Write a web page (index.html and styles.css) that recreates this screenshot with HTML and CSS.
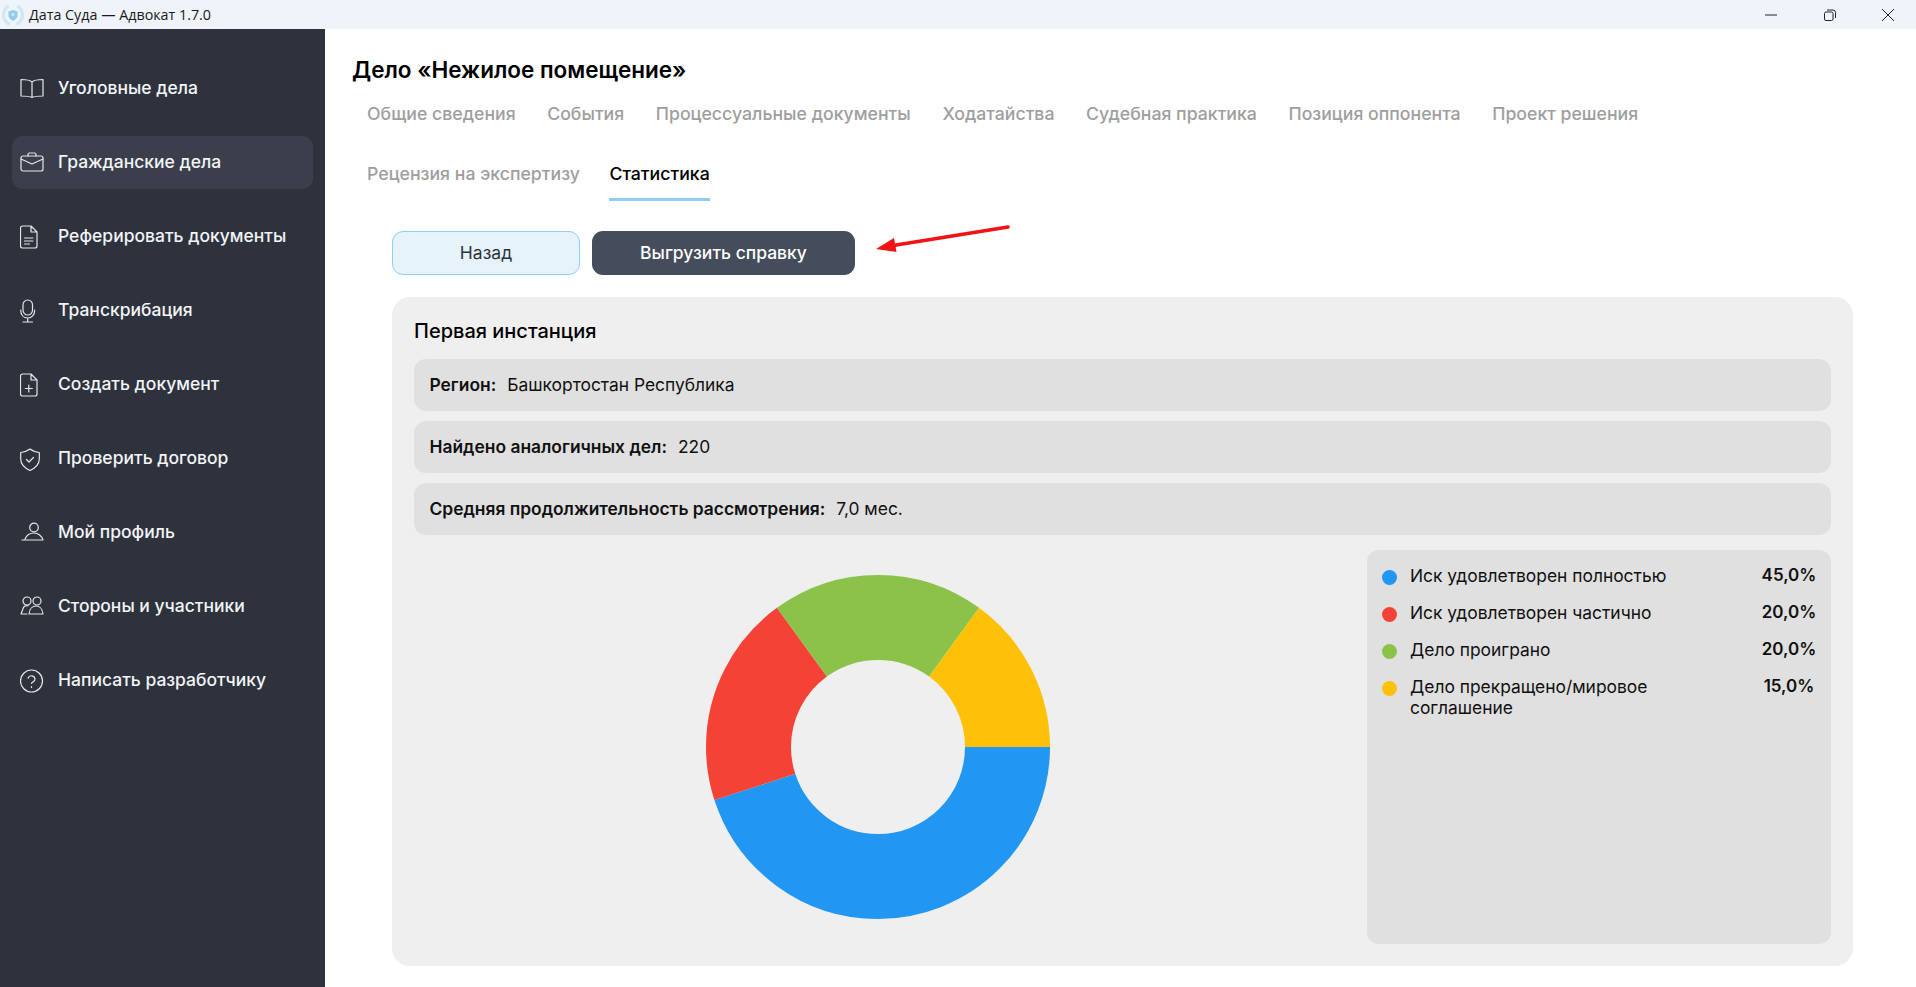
FILE: index.html
```html
<!doctype html>
<html lang="ru">
<head>
    <meta charset="utf-8"/>
    <title>Дата Суда — Адвокат 1.7.0</title>
    <link rel="stylesheet" href="styles.css">
</head>
<body>
    <header class="titlebar">
        <svg class="app-logo" viewBox="0 0 24 24" fill="none">
            <path d="M6 3C0 8 0 17 7 21.500M18 3c6 5 6 14-1 18.500" stroke="#cfe8f7" stroke-width="3.500" stroke-linecap="round"/>
            <path d="M12 6.500l5 1.800V12c0 3-2 5-5 6.500-3-1.500-5-3.500-5-6.500V8.300z" fill="#93cdee"/>
            <circle cx="12" cy="11.500" r="1.800" fill="#c8e6f8"/>
        </svg>
        <span class="app-title">Дата Суда — Адвокат 1.7.0</span>
        <div class="win-controls">
            <svg viewBox="0 0 12 12" fill="none" stroke="#222" stroke-width="1"><path d="M0 6h12"/></svg>
            <svg viewBox="0 0 12 12" fill="none" stroke="#222" stroke-width="1"><rect x=".5" y="3" width="8.500" height="8.500" rx="1.500"/><path d="M3 1h6a2.500 2.500 0 0 1 2.500 2.500V9"/></svg>
            <svg viewBox="0 0 12 12" fill="none" stroke="#222" stroke-width="1"><path d="M0 0l12 12M12 0L0 12"/></svg>
        </div>
    </header>

    <div class="app">
        <nav class="sidebar">
            <a class="nav-item">
                <svg class="nav-icon" viewBox="0 0 24 24"><path d="M12 5C10 3 6 2.500 1 2.500V19c5 0 8.500.3 11 1.500 2.500-1.200 6-1.500 11-1.500V2.500C18 2.500 14 3 12 5zM12 5v15.500"/></svg>
                Уголовные дела
            </a>
            <a class="nav-item active">
                <svg class="nav-icon" viewBox="0 0 24 24"><rect x="1" y="5" width="22" height="15" rx="2"/><path d="M8 5V3.500A1.500 1.500 0 0 1 9.500 2h5A1.500 1.500 0 0 1 16 3.500V5M1 8l11 5 11-5"/></svg>
                Гражданские дела
            </a>
            <a class="nav-item">
                <svg class="nav-icon" viewBox="0 0 24 24"><path d="M11 1H2.500a2 2 0 0 0-2 2v18a2 2 0 0 0 2 2h12.500a2 2 0 0 0 2-2V7zM11 1v6h6M4.500 13h8.500M4.500 16h8.500M4.500 19h5"/></svg>
                Реферировать документы
            </a>
            <a class="nav-item">
                <svg class="nav-icon" viewBox="0 0 24 24"><rect x="3" y="1" width="9.500" height="15" rx="4.750"/><path d="M.7 11c0 5 3 8 7 8s7-3 7-8M7.700 19v4M3 23h9.500"/></svg>
                Транскрибация
            </a>
            <a class="nav-item">
                <svg class="nav-icon" viewBox="0 0 24 24"><path d="M11 1H2.500a2 2 0 0 0-2 2v18a2 2 0 0 0 2 2h12.500a2 2 0 0 0 2-2V7zM11 1v6h6M8.800 12v7M5.300 15.500h7"/></svg>
                Создать документ
            </a>
            <a class="nav-item">
                <svg class="nav-icon" viewBox="0 0 24 24"><path d="M10 2C7.500 4 4 5 .7 5.500V12c0 5 4 9 9.300 11.500 5.300-2.500 9.300-6.500 9.300-11.500V5.500C16 5 12.500 4 10 2zM6.500 12.500L9 15l4.500-4.500"/></svg>
                Проверить договор
            </a>
            <a class="nav-item">
                <svg class="nav-icon" viewBox="0 0 24 24"><circle cx="14" cy="6.500" r="4.300"/><path d="M2 19h21c-1-4-5-7-9-7s-7.500 2.500-9 6"/></svg>
                Мой профиль
            </a>
            <a class="nav-item">
                <svg class="nav-icon" viewBox="0 0 24 24"><circle cx="7" cy="6" r="4"/><circle cx="17" cy="6" r="4"/><path d="M9 19h14c-.5-5-3.500-8-7-8s-6.500 3-7 8zM1 19l2.500-6.500c.5-1.200 2-1.800 4.500-1.800M1 19h6"/></svg>
                Стороны и участники
            </a>
            <a class="nav-item">
                <svg class="nav-icon" viewBox="0 0 24 24"><circle cx="11.500" cy="12" r="11"/><path d="M8 9.200a3.600 3.600 0 0 1 7 1c0 2.400-3.500 2.800-3.500 4.300M11.500 17.600v.8"/></svg>
                Написать разработчику
            </a>
        </nav>

        <main class="content">
            <h1 class="case-title">Дело «Нежилое помещение»</h1>
            <div class="tabs">
                <a class="tab">Общие сведения</a>
                <a class="tab">События</a>
                <a class="tab">Процессуальные документы</a>
                <a class="tab">Ходатайства</a>
                <a class="tab">Судебная практика</a>
                <a class="tab">Позиция оппонента</a>
                <a class="tab">Проект решения</a>
                <a class="tab tab-wrapped">Рецензия на экспертизу</a>
                <a class="tab current">Статистика</a>
            </div>

            <section class="stats">
                <div class="toolbar">
                    <button class="btn btn-back">Назад</button>
                    <button class="btn btn-export">Выгрузить справку</button>
                    <svg class="arrow" viewBox="0 0 136 28">
                        <path d="M134 2L16 21" stroke="#f01414" stroke-width="3.500" stroke-linecap="round"/>
                        <path d="M2 24l18-11 2.500 14z" fill="#f01414"/>
                    </svg>
                </div>

                <div class="card">
                    <h2 class="card-title">Первая инстанция</h2>
                    <div class="info-row"><b>Регион:</b> <span>Башкортостан Республика</span></div>
                    <div class="info-row"><b>Найдено аналогичных дел:</b> <span>220</span></div>
                    <div class="info-row"><b>Средняя продолжительность рассмотрения:</b> <span>7,0 мес.</span></div>

                    <div class="chart-row">
                        <div class="chart">
                            <svg class="donut" viewBox="0 0 344 344" fill="none" stroke-width="85">
                                <circle cx="172" cy="172" r="129.500" pathLength="100" stroke="#2196f3" stroke-dasharray="45 55"/>
                                <circle cx="172" cy="172" r="129.500" pathLength="100" stroke="#f44336" stroke-dasharray="20 80" stroke-dashoffset="-45"/>
                                <circle cx="172" cy="172" r="129.500" pathLength="100" stroke="#8bc34a" stroke-dasharray="20 80" stroke-dashoffset="-65"/>
                                <circle cx="172" cy="172" r="129.500" pathLength="100" stroke="#ffc107" stroke-dasharray="15 85" stroke-dashoffset="-85"/>
                            </svg>
                        </div>
                        <ul class="legend">
                            <li><i class="dot dot-blue"></i><span class="legend-label">Иск удовлетворен полностью</span><b class="legend-pct">45,0%</b></li>
                            <li><i class="dot dot-red"></i><span class="legend-label">Иск удовлетворен частично</span><b class="legend-pct">20,0%</b></li>
                            <li><i class="dot dot-green"></i><span class="legend-label">Дело проиграно</span><b class="legend-pct">20,0%</b></li>
                            <li><i class="dot dot-yellow"></i><span class="legend-label">Дело прекращено/мировое соглашение</span><b class="legend-pct">15,0%</b></li>
                        </ul>
                    </div>
                </div>
            </section>
        </main>
    </div>
</body>
</html>
```

FILE: styles.css
```css
* {
    box-sizing: border-box;
}

body {
    margin: 0;
    height: 100vh;
    overflow: hidden;
    display: flex;
    flex-direction: column;
    font-family: Inter, "Liberation Sans", sans-serif;
    color: #111;
    background: #fff;
}

.titlebar {
    height: 29px;
    flex: none;
    display: flex;
    align-items: center;
    padding-left: 2px;
    background: #eff3fa;
}
.app-logo {
    width: 22px;
    height: 22px;
}
.app-title {
    margin-left: 5px;
    font-family: "Open Sans", "Liberation Sans", sans-serif;
    font-size: 14.300px;
    color: #1a1a1a;
}
.win-controls {
    margin-left: auto;
    display: flex;
    align-items: center;
    gap: 46.500px;
    padding-right: 22px;
}
.win-controls svg {
    width: 12px;
    height: 12px;
}

.app {
    flex: 1;
    display: flex;
    min-height: 0;
}

.sidebar {
    width: 325px;
    flex: none;
    display: flex;
    flex-direction: column;
    gap: 21px;
    padding: 33px 12px 0;
    background: #2e323d;
}
.nav-item {
    height: 53px;
    display: flex;
    align-items: center;
    gap: 14px;
    padding: 0 0 2px 8px;
    border-radius: 11px;
    font-size: 17.500px;
    font-weight: 500;
    color: #f2f4f7;
}
.nav-item.active {
    background: #3a3f4b;
}
.nav-icon {
    width: 24px;
    height: 24px;
    flex: none;
    margin-top: 2px;
    fill: none;
    stroke: #e4e6ea;
    stroke-width: 1.200;
    stroke-linejoin: round;
    stroke-linecap: round;
}

.content {
    flex: 1;
    padding: 27px 63px 0 27px;
}
.case-title {
    margin: 0;
    font-size: 22.500px;
    line-height: 28px;
    font-weight: 600;
    color: #000;
}

.tabs {
    display: flex;
    flex-wrap: wrap;
    row-gap: 6px;
    margin-top: 3px;
}
.tab {
    height: 54px;
    margin: 0 15.800px;
    padding-top: 15px;
    line-height: 24px;
    font-size: 17.700px;
    font-weight: 500;
    color: #9e9e9e;
    border-bottom: 3px solid transparent;
}
.tab:first-child {
    margin-left: 15px;
}
.tab-wrapped {
    margin-left: 15px;
    margin-right: 14.500px;
}
.tab.current {
    margin-left: 15px;
    color: #000;
    border-bottom-color: #90cdf4;
}

.stats {
    margin: 30px 0 0 40px;
}
.toolbar {
    position: relative;
    display: flex;
    gap: 12px;
}
.btn {
    height: 44px;
    padding-bottom: 3px;
    border-radius: 11px;
    font-family: inherit;
    font-size: 17.500px;
}
.btn-back {
    width: 188px;
    border: 1px solid #90cdf4;
    background: #e6f3fb;
    color: #2d323d;
}
.btn-export {
    width: 263px;
    border: none;
    background: #454c5b;
    color: #fff;
    font-weight: 500;
}
.arrow {
    position: absolute;
    left: 482px;
    top: -6px;
    width: 136px;
    height: 28px;
}

.card {
    margin-top: 22px;
    display: flex;
    flex-direction: column;
    padding: 22px 22px 22px;
    border-radius: 18px;
    background: #efefef;
}
.card-title {
    margin: 0 0 6px;
    font-size: 20px;
    line-height: 24px;
    font-weight: 500;
    color: #000;
}
.info-row {
    height: 52px;
    margin-top: 10px;
    display: flex;
    align-items: center;
    gap: 11px;
    padding: 0 15.500px 1px;
    border-radius: 12px;
    background: #e0e0e0;
    font-size: 17.400px;
}
.info-row b {
    font-weight: 600;
}

.chart-row {
    height: 394px;
    margin-top: 15px;
    display: flex;
    gap: 25px;
}
.chart {
    flex: 1;
    display: flex;
    align-items: center;
    justify-content: center;
}
.donut {
    width: 344px;
    height: 344px;
}

.legend {
    width: 464px;
    flex: none;
    margin: 0;
    padding: 15px 14px 16px 15px;
    list-style: none;
    border-radius: 12px;
    background: #e0e0e0;
    font-size: 17.400px;
    line-height: 21px;
}
.legend li {
    display: flex;
    align-items: flex-start;
    margin-bottom: 16px;
}
.dot {
    width: 15px;
    height: 15px;
    flex: none;
    margin: 5px 13px 0 0;
    border-radius: 50%;
}
.dot-blue { background: #2196f3; }
.dot-red { background: #f44336; }
.dot-green { background: #8bc34a; }
.dot-yellow { background: #ffc107; }
.legend-label {
    width: 300px;
}
.legend-pct {
    margin-left: auto;
    width: 56px;
    text-align: center;
    font-size: 17px;
    font-weight: 600;
}
```
